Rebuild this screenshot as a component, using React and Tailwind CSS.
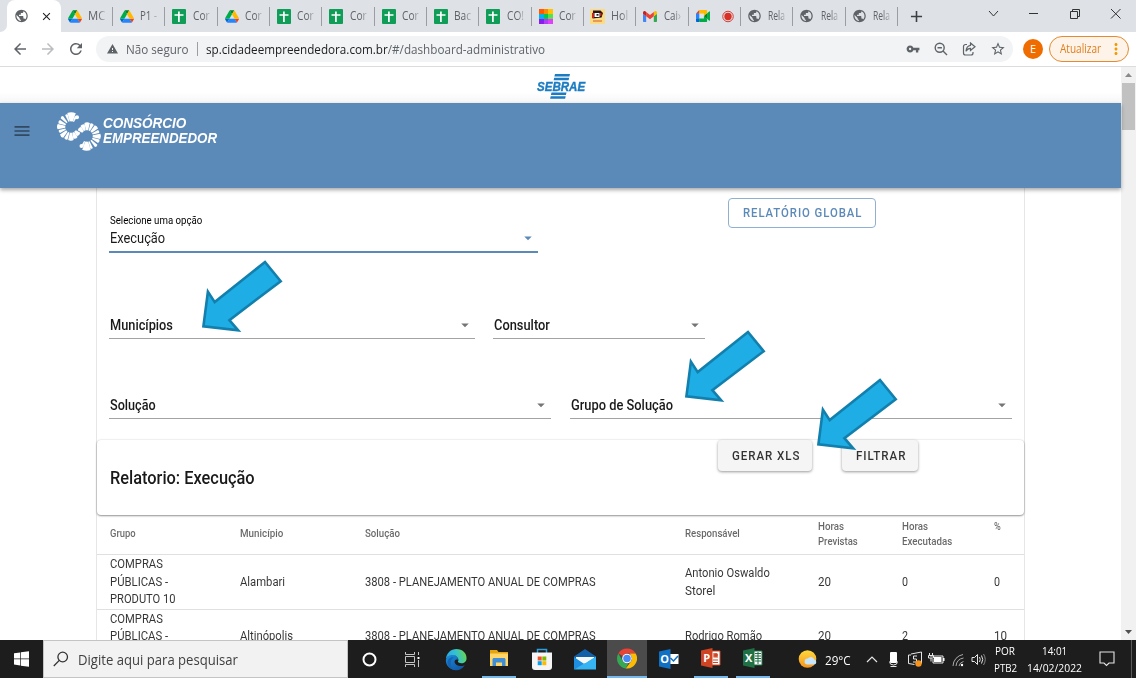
import React, { useLayoutEffect, useRef } from "react";
import {
  MdArrowBack, MdArrowForward, MdRefresh, MdWarning, MdVpnKey, MdStarBorder,
  MdPublic, MdClose, MdMenu, MdAdd, MdMoreVert, MdArrowDropDown,
} from "react-icons/md";

/* Text drawn at exactly `w` pixels wide, whatever the font's own advance is. */
function Fit({ w, className = "", children }) {
  const ref = useRef(null);
  useLayoutEffect(() => {
    const el = ref.current;
    el.style.transform = `scaleX(${w / el.offsetWidth})`;
  }, [w, children]);
  return (
    <span className={"block shrink-0 " + className} style={{ width: w }}>
      <span ref={ref} className="inline-block origin-left whitespace-nowrap">{children}</span>
    </span>
  );
}

/* ---------- tab icons ---------- */
const Drive = () => (
  <svg className="h-[13px] w-[14px]" viewBox="0 0 87.3 78">
    <path fill="#0066da" d="m6.6 66.85 3.85 6.65c.8 1.4 1.95 2.5 3.3 3.3l13.75-23.8h-27.5c0 1.55.4 3.1 1.2 4.5z" />
    <path fill="#00ac47" d="m43.65 25-13.75-23.8c-1.35.8-2.5 1.9-3.3 3.3l-25.4 44a9.06 9.06 0 0 0 -1.2 4.5h27.5z" />
    <path fill="#ea4335" d="m73.55 76.8c1.35-.8 2.5-1.9 3.3-3.3l1.6-2.75 7.65-13.25c.8-1.4 1.2-2.95 1.2-4.5h-27.5l5.85 11.5z" />
    <path fill="#00832d" d="m43.65 25 13.75-23.8c-1.35-.8-2.9-1.2-4.5-1.2h-18.5c-1.6 0-3.15.45-4.5 1.2z" />
    <path fill="#2684fc" d="m59.8 53h-32.3l-13.75 23.8c1.35.8 2.9 1.2 4.5 1.2h50.8c1.6 0 3.15-.45 4.5-1.2z" />
    <path fill="#ffba00" d="m73.4 26.5-12.7-22c-.8-1.4-1.95-2.5-3.3-3.3l-13.75 23.8 16.15 28h27.45c0-1.55-.4-3.1-1.2-4.5z" />
  </svg>
);
const Sheet = () => (
  <svg className="h-[15px] w-[14px]" viewBox="0 0 14 15">
    <rect width="14" height="15" rx="1" fill="#0f9d58" />
    <path d="M6.9 2.500v10.500M2.500 6h9" stroke="#fff" strokeWidth="1.700" />
  </svg>
);
const Globe = () => <MdPublic className="h-[16px] w-[15px] text-[#5f6368]" />;
const Palette = () => (
  <svg className="h-[15px] w-[14px]" viewBox="0 0 3 3" preserveAspectRatio="none" shapeRendering="crispEdges">
    <path fill="#ff5a00" d="M0 0h1v1H0z" /><path fill="#ff8a00" d="M1 0h1v1H1z" /><path fill="#ffc400" d="M2 0h1v1H2z" />
    <path fill="#00b4f0" d="M0 1h1v1H0z" /><path fill="#00c853" d="M1 1h1v1H1z" /><path fill="#5be04a" d="M2 1h1v1H2z" />
    <path fill="#8a1cf0" d="M0 2h1v1H0z" /><path fill="#b03cf5" d="M1 2h1v1H1z" /><path fill="#e040fb" d="M2 2h1v1H2z" />
  </svg>
);
const Toon = () => (
  <svg className="h-[15px] w-[15px]" viewBox="0 0 15 15">
    <rect width="15" height="15" fill="#fbdc84" />
    <path fill="#2a1512" d="M3 1.500l7.500 0 2.500 2.500-1.500 4.500-9 1z" />
    <path fill="#c5281c" d="M2 4h2v5H2zM10 4h1.500v3H10z" />
    <path fill="#fff" d="M4.500 4h5v4h-5z" />
    <path fill="#222" d="M6.500 5h2v1.700h-2z" />
    <path stroke="#d8562a" d="M3 12h9" />
  </svg>
);
const Gmail = () => (
  <svg className="h-[11px] w-[14px]" viewBox="52 42 88 66" preserveAspectRatio="none">
    <path fill="#4285f4" d="M58 108h14V74L52 59v43c0 3.320 2.690 6 6 6" />
    <path fill="#34a853" d="M120 108h14c3.320 0 6-2.690 6-6V59l-20 15" />
    <path fill="#fbbc04" d="M120 48v26l20-15v-8c0-7.420-8.470-11.650-14.400-7.200" />
    <path fill="#ea4335" d="M72 74V48l24 18 24-18v26L96 92" />
    <path fill="#c5221f" d="M52 51v8l20 15V48l-5.600-4.200c-5.940-4.450-14.400-.22-14.400 7.200" />
  </svg>
);
const Meet = () => (
  <svg className="h-[12px] w-[14px]" viewBox="0 0 87.500 72" preserveAspectRatio="none">
    <path fill="#00832d" d="M49.500 36l8.530 9.750 11.470 7.330 2-17.020-2-16.640-11.690 6.440z" />
    <path fill="#0066da" d="M0 51.500V66c0 3.315 2.685 6 6 6h14.500l3-10.960-3-9.540-9.950-3z" />
    <path fill="#e94235" d="M20.500 0L0 20.500l10.550 3 9.950-3 2.950-9.410z" />
    <path fill="#2684fc" d="M20.500 20.500H0v31h20.500z" />
    <path fill="#00ac47" d="M82.600 8.680L69.500 19.420v33.660l13.160 10.790c1.970 1.540 4.850.135 4.850-2.370V11c0-2.535-2.945-3.925-4.910-2.320zM49.500 36v15.500h-29V72h43c3.315 0 6-2.685 6-6V53.080z" />
    <path fill="#ffba00" d="M63.500 0h-43v20.500h29V36l20-16.570V6c0-3.315-2.685-6-6-6z" />
  </svg>
);
const Rec = () => (
  <svg className="h-[13px] w-[12px] shrink-0" viewBox="0 0 13 13">
    <circle cx="6.500" cy="6.500" r="5.700" fill="none" stroke="#d93025" />
    <circle cx="6.500" cy="6.500" r="4" fill="#d93025" />
  </svg>
);

const TABS = [
  [Drive, "MC"], [Drive, "P1 -"], [Sheet, "Cor"], [Drive, "Cor"], [Sheet, "Cor"], [Sheet, "Cor"], [Sheet, "Cor"],
  [Sheet, "Bac"], [Sheet, "CO!"], [Palette, "Cor"], [Toon, "Hol"], [Gmail, "Cai›"], [Meet, null],
  [Globe, "Rela"], [Globe, "Rela"], [Globe, "Rela"],
];

function TabStrip() {
  return (
    <div className="flex h-8 bg-[#dee1e6]">
      <div className="flex w-[7px] items-end bg-white"><div className="h-full w-full rounded-br-lg bg-[#dee1e6]" /></div>
      <div className="flex h-full w-[53.500px] items-center rounded-t-lg bg-white pl-[7px]">
        <MdPublic className="h-[16px] w-[15px] text-[#5f6368]" />
        <MdClose className="ml-[11px] h-[13px] w-[13px] text-[#202124]" />
      </div>
      {TABS.map(([Icon, label], i) => (
        <div key={i} className="flex h-full w-[52.350px] shrink-0 items-center">
          <div className="flex w-[21px] shrink-0 justify-end"><Icon /></div>
          {label ? (
            <Fit w={17} className="ml-[6.500px] text-[12px] text-[#5f6368] [mask-image:linear-gradient(90deg,#000_60%,rgba(0,0,0,0.25))]">{label}</Fit>
          ) : <div className="ml-[12px]"><Rec /></div>}
          <div className="ml-auto h-[19px] w-px bg-[#9a9da1]" />
        </div>
      ))}
      <MdAdd className="mt-[7px] ml-[9px] h-[19px] w-[19px] text-[#3c4043]" />
      <svg className="ml-auto h-[30px] w-[150px]" viewBox="986 0 150 30" fill="none" stroke="#333">
        <path d="M989 11l4.500 5 4.500-5M1029 13.500h9M1111 9l9.500 9.500M1120.500 9l-9.500 9.500" />
        <path d="M1070.500 11.500h7v7h-7zM1072.500 11.500v-2h7v7h-2" />
      </svg>
    </div>
  );
}

function Toolbar() {
  return (
    <div className="flex h-[35px] items-center border-b border-[#dcdcdc] bg-white">
      <MdArrowBack className="ml-[11px] h-[18px] w-[18px] text-[#5f6368]" />
      <MdArrowForward className="ml-[10px] h-[18px] w-[18px] text-[#babcbe]" />
      <MdRefresh className="ml-[10px] h-[18px] w-[18px] text-[#5f6368]" />
      <div className="ml-[11px] flex h-[26px] w-[917px] shrink-0 items-center rounded-full bg-[#f1f3f4] pl-[10px] text-[13.500px]">
        <MdWarning className="h-[12px] w-[13px] text-[#5f6368]" />
        <Fit w={63} className="ml-[7px] text-[#5f6368]">Não seguro</Fit>
        <div className="ml-[8px] h-[14px] w-px bg-[#9aa0a6]" />
        <Fit w={339} className="ml-[8px] text-[#5f6368]"><span className="text-[#202124]">sp.cidadeempreendedora.com.br</span>/#/dashboard-administrativo</Fit>
        <div className="mr-[7px] ml-auto flex items-center gap-[14px] text-[#5f6368]">
          <MdVpnKey className="h-[14px] w-[14px]" />
          <svg className="h-[14px] w-[14px]" viewBox="0 0 14 14" fill="none" stroke="currentColor" strokeWidth="1.400">
            <circle cx="5.700" cy="5.700" r="4.500" /><path d="M9 9l4 4M3.500 5.700h4.400" />
          </svg>
          <svg className="h-[14px] w-[14px]" viewBox="0 0 14 14" fill="none" stroke="currentColor" strokeWidth="1.200">
            <path d="M5 2.500H3.500a2 2 0 0 0-2 2V11a2 2 0 0 0 2 2H9a2 2 0 0 0 2-2v-1" />
            <path d="M8.500 1l4.500 3.800-4.500 3.700V6.400C6 6.400 5 7.500 4 9.300c.2-3 1.500-5.600 4.500-6z" />
          </svg>
          <MdStarBorder className="h-[16px] w-[16px]" />
        </div>
      </div>
      <div className="ml-[10px] flex h-[20px] w-[20px] shrink-0 items-center justify-center rounded-full bg-[#ee6c00] text-[11px] text-white">E</div>
      <div className="ml-[6px] flex h-[26px] w-[80px] shrink-0 items-center rounded-full border border-[#e58a2e] bg-[#fdf3e8] pl-[10px] text-[12px] text-[#e07d1c]">
        <Fit w={41}>Atualizar</Fit>
        <MdMoreVert className="ml-[6px] h-[18px] w-[18px] text-[#f29900]" />
      </div>
    </div>
  );
}

/* ---------- brand marks ---------- */
function petals(cx, cy, from, to, sizes) {
  return sizes.map(([r, half], i) => {
    const a = ((from + ((to - from) * i) / (sizes.length - 1)) * Math.PI) / 180;
    const h = (half * Math.PI) / 180;
    const p = (rad, ang) => `${(cx + rad * Math.cos(ang)).toFixed(2)} ${(cy + rad * Math.sin(ang)).toFixed(2)}`;
    return <path key={i} d={`M${p(5.8, a - h * 0.9)}L${p(r, a - h)}Q${p(r + 1.3, a)} ${p(r, a + h)}L${p(5.8, a + h * 0.9)}z`} />;
  });
}
const PETALS = [[11, 6], [14.5, 17], [13, 6], [13.5, 7], [13, 8], [13.5, 11], [12.5, 7], [13.3, 10], [13, 8], [13.2, 12], [12, 11], [11, 13]];

function ConsorcioLogo() {
  return (
    <div className="flex items-center">
      <svg className="h-[40px] w-[46px]" viewBox="57 112 46 40" fill="#fff">
        {petals(71, 127, -65, -315, PETALS)}
        {petals(87, 136, 115, -135, PETALS)}
        <circle cx="77" cy="117.300" r="2" /><circle cx="81.500" cy="146" r="2" />
      </svg>
      <div className="mb-[3px] font-['Liberation_Sans',sans-serif] text-[14.500px] leading-[14.500px] font-bold text-white italic">
        <Fit w={83}>CONSÓRCIO</Fit>
        <Fit w={114}>EMPREENDEDOR</Fit>
      </div>
    </div>
  );
}

function SebraeLogo() {
  return (
    <div className="flex w-[49px] flex-col text-[#1b7cc2]">
      <svg className="h-[7px] w-[49px]" viewBox="0 0 49 7" fill="currentColor">
        <path d="M19 0h15l-.6 2.500h-15zM18.200 3.800h15l-.6 2.400h-15z" />
      </svg>
      <Fit w={48} className="ml-[0.500px] font-['Liberation_Sans',sans-serif] text-[13px] leading-[11px] font-bold italic [-webkit-text-stroke:0.400px_#1b7cc2]">SEBRAE</Fit>
      <svg className="h-[7px] w-[49px]" viewBox="0 0 49 7" fill="currentColor">
        <path d="M15.500 .5h15l-.6 2.400h-15zM14.700 4.200h15l-.6 2.500h-15z" />
      </svg>
    </div>
  );
}

/* ---------- form ---------- */
function Select({ label, w, className, active }) {
  return (
    <div className={"flex items-center justify-between pl-[0.700px] pr-[1px] text-[14px] text-black/90 " + (active ? "border-b-2 border-[#5c8ab8] " : "border-b border-[#a3a3a3] pt-[1px] ") + className}>
      <Fit w={w} className={active ? "" : "font-medium"}>{label}</Fit>
      <MdArrowDropDown className={"mb-px h-[20px] w-[18px] " + (active ? "text-[#5c8ab8]" : "text-[#757575]")} />
    </div>
  );
}

function Arrow({ className }) {
  return (
    <svg className={"absolute h-[76px] w-[86px] " + className} viewBox="200 258 86 76">
      <path d="M265 262L280.700 281.200 229.400 320.100 238.200 330.400 203.400 326.300 207.900 291.600 214.700 302.100z" fill="#1eade4" stroke="#127fac" strokeWidth="2.600" />
    </svg>
  );
}

const COLS = "grid grid-cols-[130.500px_125px_320px_133px_83.500px_92.500px_30px] items-center pl-[12.700px]";

function Row({ cells }) {
  const [groups, city, cityW, resp, hp, he, pct, heW, pctW] = cells;
  return (
    <div className={COLS + " h-[54.500px] border-b border-[#e0e0e0] text-[12.500px] leading-[17.700px] text-black/80"}>
      <div className="h-[53.500px]">{groups.map(([t, w]) => <Fit key={t} w={w}>{t}</Fit>)}</div>
      <Fit w={cityW}>{city}</Fit>
      <Fit w={231}>3808 - PLANEJAMENTO ANUAL DE COMPRAS</Fit>
      <div>{resp.map(([t, w]) => <Fit key={t} w={w}>{t}</Fit>)}</div>
      <Fit w={13}>{hp}</Fit>
      <Fit w={heW}>{he}</Fit>
      <Fit w={pctW}>{pct}</Fit>
    </div>
  );
}

function Page() {
  return (
    <div className="relative flex h-[573px] overflow-hidden bg-white font-['Roboto',sans-serif]">
      <div className="flex w-[1121px] shrink-0 flex-col">
        <div className="flex h-[36px] shrink-0 justify-center bg-gradient-to-b from-white from-70% to-[#f6f6f6] pt-[7px]"><SebraeLogo /></div>
        <header className="relative z-10 flex h-[85px] shrink-0 items-start bg-[#5c8ab8] pt-[9px] pl-[12px] shadow-[0_2px_4px_rgba(0,0,0,0.35)]">
          <MdMenu className="mt-[9px] h-[20px] w-[20px] text-[#314961]" />
          <div className="ml-[25px]"><ConsorcioLogo /></div>
        </header>
        <main className="ml-[96px] w-[929px] flex-1 border-x border-[#e6e6e6]">
          <div className="flex h-[252px] flex-col px-[12px]">
            <div className="flex">
              <div className="flex w-[429px] flex-col pt-[26px]">
                <Fit w={92} className="ml-[0.700px] text-[10.500px] leading-[13px] text-black">Selecione uma opção</Fit>
                <Select active label="Execução" w={55} className="mt-[-1px] h-[27px]" />
              </div>
              <div className="mt-[10px] ml-[190px] flex h-[30px] w-[148px] items-center rounded-[4px] border border-[#8fb0d0] pl-[14px] text-[12px] font-medium tracking-[1px] text-[#5c8ab8]">
                <Fit w={119}>RELATÓRIO GLOBAL</Fit>
              </div>
            </div>
            <div className="mt-[58px] flex gap-[18px]">
              <Select label="Municípios" w={63} className="h-[28px] w-[366px]" />
              <Select label="Consultor" w={56} className="h-[28px] w-[212px]" />
            </div>
            <div className="mt-[52px] flex gap-[19px]">
              <Select label="Solução" w={46} className="h-[28px] w-[442px]" />
              <Select label="Grupo de Solução" w={102} className="h-[28px] w-[442px]" />
            </div>
          </div>
          <section className="flex h-[75px] rounded-[4px] bg-white pl-[12.700px] shadow-[0_1px_2px_rgba(0,0,0,0.4),0_0_2px_rgba(0,0,0,0.15)]">
            <Fit w={145} className="pt-[25px] text-[17.500px] leading-[26px] font-medium text-black/90">Relatorio: Execução</Fit>
            <div className="ml-[463.300px] flex h-[31px] gap-[30px] text-[12px] font-medium tracking-[1px] text-black/80">
              <div className="flex w-[94px] items-center rounded-[4px] bg-[#f5f5f5] pl-[14px] shadow-[0_1px_3px_rgba(0,0,0,0.4)]"><Fit w={68}>GERAR XLS</Fit></div>
              <div className="flex w-[76px] items-center rounded-[4px] bg-[#f5f5f5] pl-[14px] shadow-[0_1px_3px_rgba(0,0,0,0.4)]"><Fit w={50}>FILTRAR</Fit></div>
            </div>
          </section>
          <div className={COLS + " h-[40px] border-b border-[#e0e0e0] pb-[2px] text-[10.500px] leading-[15px] font-medium text-black/60"}>
            <Fit w={26}>Grupo</Fit>
            <Fit w={43}>Município</Fit>
            <Fit w={35}>Solução</Fit>
            <Fit w={55}>Responsável</Fit>
            <div><Fit w={26}>Horas</Fit><Fit w={40}>Previstas</Fit></div>
            <div><Fit w={26}>Horas</Fit><Fit w={50}>Executadas</Fit></div>
            <Fit w={7} className="mt-[-15px]">%</Fit>
          </div>
          <Row cells={[[["COMPRAS", 53], ["PÚBLICAS -", 58], ["PRODUTO 10", 66]], "Alambari", 45, [["Antonio Oswaldo", 85], ["Storel", 30]], "20", "0", "0", 6, 6]} />
          <Row cells={[[["COMPRAS", 53], ["PÚBLICAS -", 58]], "Altinópolis", 53, [["Rodrigo Romão", 77]], "20", "2", "10", 6, 13]} />
        </main>
      </div>
      <div className="flex w-[15px] flex-col items-center justify-between bg-[#f1f1f1]">
        <div className="flex flex-col items-center">
          <svg className="h-[16px] w-[15px]" viewBox="0 0 15 16"><path d="M4 10l3.500-4 3.500 4z" fill="#8a8a8a" /></svg>
          <div className="h-[47px] w-[13px] bg-[#c1c1c1]" />
        </div>
        <svg className="h-[16px] w-[15px]" viewBox="0 0 15 16"><path d="M4 6l3.500 4 3.500-4z" fill="#505050" /></svg>
      </div>
      <Arrow className="top-[190.500px] left-[199.500px]" />
      <Arrow className="top-[260.500px] left-[682.500px]" />
      <Arrow className="top-[308.500px] left-[814.500px]" />
    </div>
  );
}

/* ---------- taskbar ---------- */
const Edge = () => (
  <svg className="h-[23px] w-[22px]" viewBox="0 0 24 24">
    <defs>
      <linearGradient id="eg" x1="0" y1="0.500" x2="1" y2="0.300"><stop offset="0" stopColor="#2aa7e8" /><stop offset=".5" stopColor="#35c1d0" /><stop offset="1" stopColor="#66d94a" /></linearGradient>
      <linearGradient id="eb" x1="0" y1="0" x2="1" y2="1"><stop offset="0" stopColor="#1b8fdd" /><stop offset="1" stopColor="#0f4f9e" /></linearGradient>
    </defs>
    <path fill="url(#eb)" d="M1 12C2 8 6 6 10 7c3 1 4.500 3 4 5.500-1.500-1.200-4 .3-3.500 2.500.6 3.500 6 5.500 11 3.200C19 22.500 15 24 11.500 23.600 5 23 .3 18 1 12z" />
    <path fill="url(#eg)" d="M1 11.500C1.500 5 6.500.6 12.500.6 19 .6 23.500 5 23.500 10.500c0 3.500-2.500 5.500-5.500 5.500-2.500 0-4.300-.8-4-1.700.8-1 .8-2.200.3-3.500C13 7.500 9.500 6.500 6.500 7.200 3.800 7.900 2 9.500 1 11.500z" />
    <path fill="#1464b4" d="M7 12.500c-2 4 .5 9.500 5 11-5 .3-9-3.500-9.300-8C2.500 12 6 9 9.500 9.700 8.500 10.200 7.500 11.300 7 12.500z" />
  </svg>
);
const Folder = () => (
  <svg className="h-[18px] w-[20px]" viewBox="0 0 20 18">
    <path fill="#e5a50e" d="M1 1h7l1.500 2H19v5H1z" /><path fill="#ffd667" d="M1 4.500h18V17H1z" />
    <path fill="#3f8fd8" d="M3.500 17v-6.500c0-1 .6-1.500 1.500-1.500h10c.9 0 1.500.5 1.500 1.500V17h-3.500v-3.500H7V17z" />
  </svg>
);
const Store = () => (
  <svg className="h-[23px] w-[22px]" viewBox="0 0 22 23">
    <path d="M6.500 5V1.500h9V5" fill="none" stroke="#2a9fe0" strokeWidth="1.500" />
    <path fill="#f5f5f5" d="M1 4.500h20V19c0 2-1 3-3 3H4c-2 0-3-1-3-3z" />
    <path fill="#f25022" d="M6.700 8.500h4v4h-4z" /><path fill="#7fba00" d="M11.300 8.500h4v4h-4z" />
    <path fill="#00a4ef" d="M6.700 13.200h4v4h-4z" /><path fill="#ffb900" d="M11.300 13.200h4v4h-4z" />
  </svg>
);
const Mail = () => (
  <svg className="h-[21px] w-[22px]" viewBox="0 0 22 21">
    <path fill="#1260a8" d="M0 7.500L11 0l11 7.500V12H0z" /><path fill="#f7f7f7" d="M2 8h18v6l-9 3-9-3z" />
    <path fill="#1e8fe0" d="M0 8l11 7.500L0 20.500z" /><path fill="#35b3f2" d="M22 7.500V20.500H0z" />
    <path fill="#f7f7f7" d="M3 8h17l-8.500 6z" />
  </svg>
);
const Chrome = () => (
  <svg className="h-[21px] w-[20px]" viewBox="0 0 48 48">
    <path fill="#ea4335" d="M24 0a24 24 0 0 1 20.800 12H24a12 12 0 0 0-10.400 6L3.200 12A24 24 0 0 1 24 0z" />
    <path fill="#34a853" d="M3.200 12l10.400 18A12 12 0 0 0 24 36l3 0-6 11.800A24 24 0 0 1 3.200 12z" />
    <path fill="#fbbc05" d="M44.800 12a24 24 0 0 1-23.900 35.800L34.400 30a12 12 0 0 0 0-12l-4-6z" />
    <circle cx="24" cy="24" r="11.500" fill="#fff" /><circle cx="24" cy="24" r="9" fill="#4a8af4" />
  </svg>
);
function Office({ color, letter, children }) {
  return (
    <svg className="h-[20px] w-[20px]" viewBox="0 0 20 20">
      {children}
      <path fill={color} d="M0 2.500L11.500 0v20L0 17.500z" />
      <text x="5.600" y="14" textAnchor="middle" className="font-['Open_Sans',sans-serif] text-[11px] font-bold" fill="#fff">{letter}</text>
    </svg>
  );
}

function TaskItem({ className, children }) {
  return <div className={"flex h-full shrink-0 items-center justify-center " + className}>{children}</div>;
}

function Taskbar() {
  return (
    <div className="flex h-[38px] bg-[#1d1d1d] text-white">
      <TaskItem className="w-[43px]">
        <svg className="h-[16px] w-[15px]" viewBox="0 0 15 16" fill="#fff"><path d="M0 2.300L6.200 1.400V7.600H0zM6.900 1.300L15 .2V7.600H6.900zM0 8.300H6.200V14.500L0 13.600zM6.900 8.300H15V15.800L6.900 14.700z" /></svg>
      </TaskItem>
      <div className="flex w-[305px] shrink-0 items-center border border-[#c4c4c4] bg-[#f2f2f2] pt-[1px] text-[14.500px] text-[#404040]">
        <svg className="mt-[-2px] ml-[9px] h-[16px] w-[16px]" viewBox="0 0 16 16" fill="none" stroke="#333" strokeWidth="1.300"><circle cx="9.700" cy="6" r="4.800" /><path d="M6.300 9.400L.8 15" /></svg>
        <Fit w={160} className="ml-[9px]">Digite aqui para pesquisar</Fit>
      </div>
      <TaskItem className="w-[43px]"><svg className="h-[15px] w-[15px]" viewBox="0 0 15 15"><circle cx="7.500" cy="7.500" r="6" fill="none" stroke="#fff" strokeWidth="2" /></svg></TaskItem>
      <TaskItem className="w-[41px]">
        <svg className="h-[15px] w-[16px]" viewBox="0 0 16 15" fill="none" stroke="#c4c4c4"><path d="M1.500 4.500h9v6h-9zM1.500 0v2.500h9V0M1.500 15v-2.500h9V15M14.500 0v3M14.500 8v7" /><path d="M13.500 5h2v2h-2z" fill="#fff" stroke="none" /></svg>
      </TaskItem>
      <TaskItem className="w-[47px]"><Edge /></TaskItem>
      <TaskItem className="ml-[3px] w-[34px] border-b-2 border-[#76b9ed]"><Folder /></TaskItem>
      <TaskItem className="ml-[4px] w-[43px]"><Store /></TaskItem>
      <TaskItem className="w-[44px]"><Mail /></TaskItem>
      <TaskItem className="w-[40px] border-b-2 border-[#76b9ed] bg-[#4b4b4b]"><Chrome /></TaskItem>
      <TaskItem className="w-[43px]">
        <Office color="#0f70c4" letter="O"><path fill="#fff" d="M10 5h9.500v10H10z" /><path d="M11.500 9l3 3 4.500-5" fill="none" stroke="#0f70c4" strokeWidth="1.500" /></Office>
      </TaskItem>
      <TaskItem className="ml-[4px] w-[34px] border-b-2 border-[#76b9ed]">
        <Office color="#d04423" letter="P"><path fill="#fff" stroke="#d04423" d="M10 3h9v14h-9z" /><path d="M12 12h5M12 14.500h5M13 5v4h4" stroke="#d04423" fill="none" strokeWidth="1.200" /><circle cx="15" cy="7" r="2" fill="#d04423" /></Office>
      </TaskItem>
      <TaskItem className="ml-[8px] w-[34px] border-b-2 border-[#76b9ed]">
        <Office color="#1f7145" letter="X"><path fill="#fff" stroke="#1f7145" d="M10 3h9v14h-9z" /><path d="M12 5.500h6M12 8h6M12 10.500h6M12 13h6M15 4v12" stroke="#1f7145" /></Office>
      </TaskItem>
      <svg className="mt-[9px] ml-[28px] h-[20px] w-[20px] shrink-0" viewBox="0 0 20 20">
        <defs><linearGradient id="sun" x1="0" y1="0" x2="0" y2="1"><stop offset="0" stopColor="#ffd83d" /><stop offset="1" stopColor="#f7941d" /></linearGradient></defs>
        <circle cx="9.500" cy="10" r="8.800" fill="url(#sun)" /><path fill="#c6e4fa" d="M9.500 15.500a3 3 0 0 1 .2-6 3.800 3.800 0 0 1 6.600 1 2.600 2.600 0 0 1 .2 5z" />
      </svg>
      <Fit w={26} className="mt-[11px] ml-[7px] text-[13px] leading-[19px]">29°C</Fit>
      <svg className="mt-[8px] ml-[13px] h-[22px] w-[124px] shrink-0" viewBox="864 648 124 22" fill="none" stroke="#e6e6e6">
        <path d="M867 662l5-5 5 5" strokeWidth="1.200" />
        <rect x="890" y="652" width="7" height="11" rx="1" fill="#fff" stroke="none" /><path d="M889.500 661.500q0 3.500 4 3.500t4-3.500M890.500 666.500h6" />
        <path d="M911 654l10.500-2v11.500M908.500 655v8.500l6 1M908.500 655h2.500M917 656h-3.500v3h3v3h-3.500" />
        <circle cx="918.500" cy="663.500" r="3.200" fill="#f7941d" stroke="none" />
        <path d="M930 656h13v7h-10v-4" /><path fill="#fff" stroke="none" d="M934 657h7.500v5H934zM943 658h1.500v3H943z" /><path d="M929.500 653v2M932.500 653v2M928.500 655.500h5v2.500h-5zM931 658v3.500" />
        <path stroke="#aaa" d="M953 666a12 12 0 0 1 10-11.500M956 666a9 9 0 0 1 7.500-8M959 666a6 6 0 0 1 4.500-4.500" /><circle cx="962" cy="665" r="1.200" fill="#fff" stroke="none" />
        <path d="M972 657.500h2.500l3-3v10l-3-3H972zM979.500 657q1.500 2.500 0 5M981.500 655.500q2.500 4 0 8" /><path stroke="#888" d="M983.500 654q3.500 5.500 0 11" />
      </svg>
      <div className="ml-[5px] w-[26px] pt-[2px] text-[11.500px] leading-[17px]">
        <Fit w={20} className="ml-[2px]">POR</Fit>
        <Fit w={23} className="ml-px">PTB2</Fit>
      </div>
      <div className="ml-[8px] w-[56px] pt-[2px] text-[11.500px] leading-[17px]">
        <Fit w={25} className="ml-[15px]">14:01</Fit>
        <Fit w={55}>14/02/2022</Fit>
      </div>
      <svg className="mt-[11px] ml-[16px] h-[18px] w-[16px] shrink-0" viewBox="0 0 16 18" fill="none" stroke="#e6e6e6" strokeWidth="1.100"><path d="M1 1h14v11h-5l-2.500 2.500L5 12H1z" /></svg>
      <div className="mr-[4px] ml-auto h-full w-px bg-[#5a5a5a]" />
    </div>
  );
}

export default function App() {
  return (
    <div className="flex h-[678px] w-[1136px] flex-col overflow-hidden bg-white font-['Open_Sans','Noto_Sans',sans-serif]">
      <TabStrip />
      <Toolbar />
      <Page />
      <Taskbar />
    </div>
  );
}
